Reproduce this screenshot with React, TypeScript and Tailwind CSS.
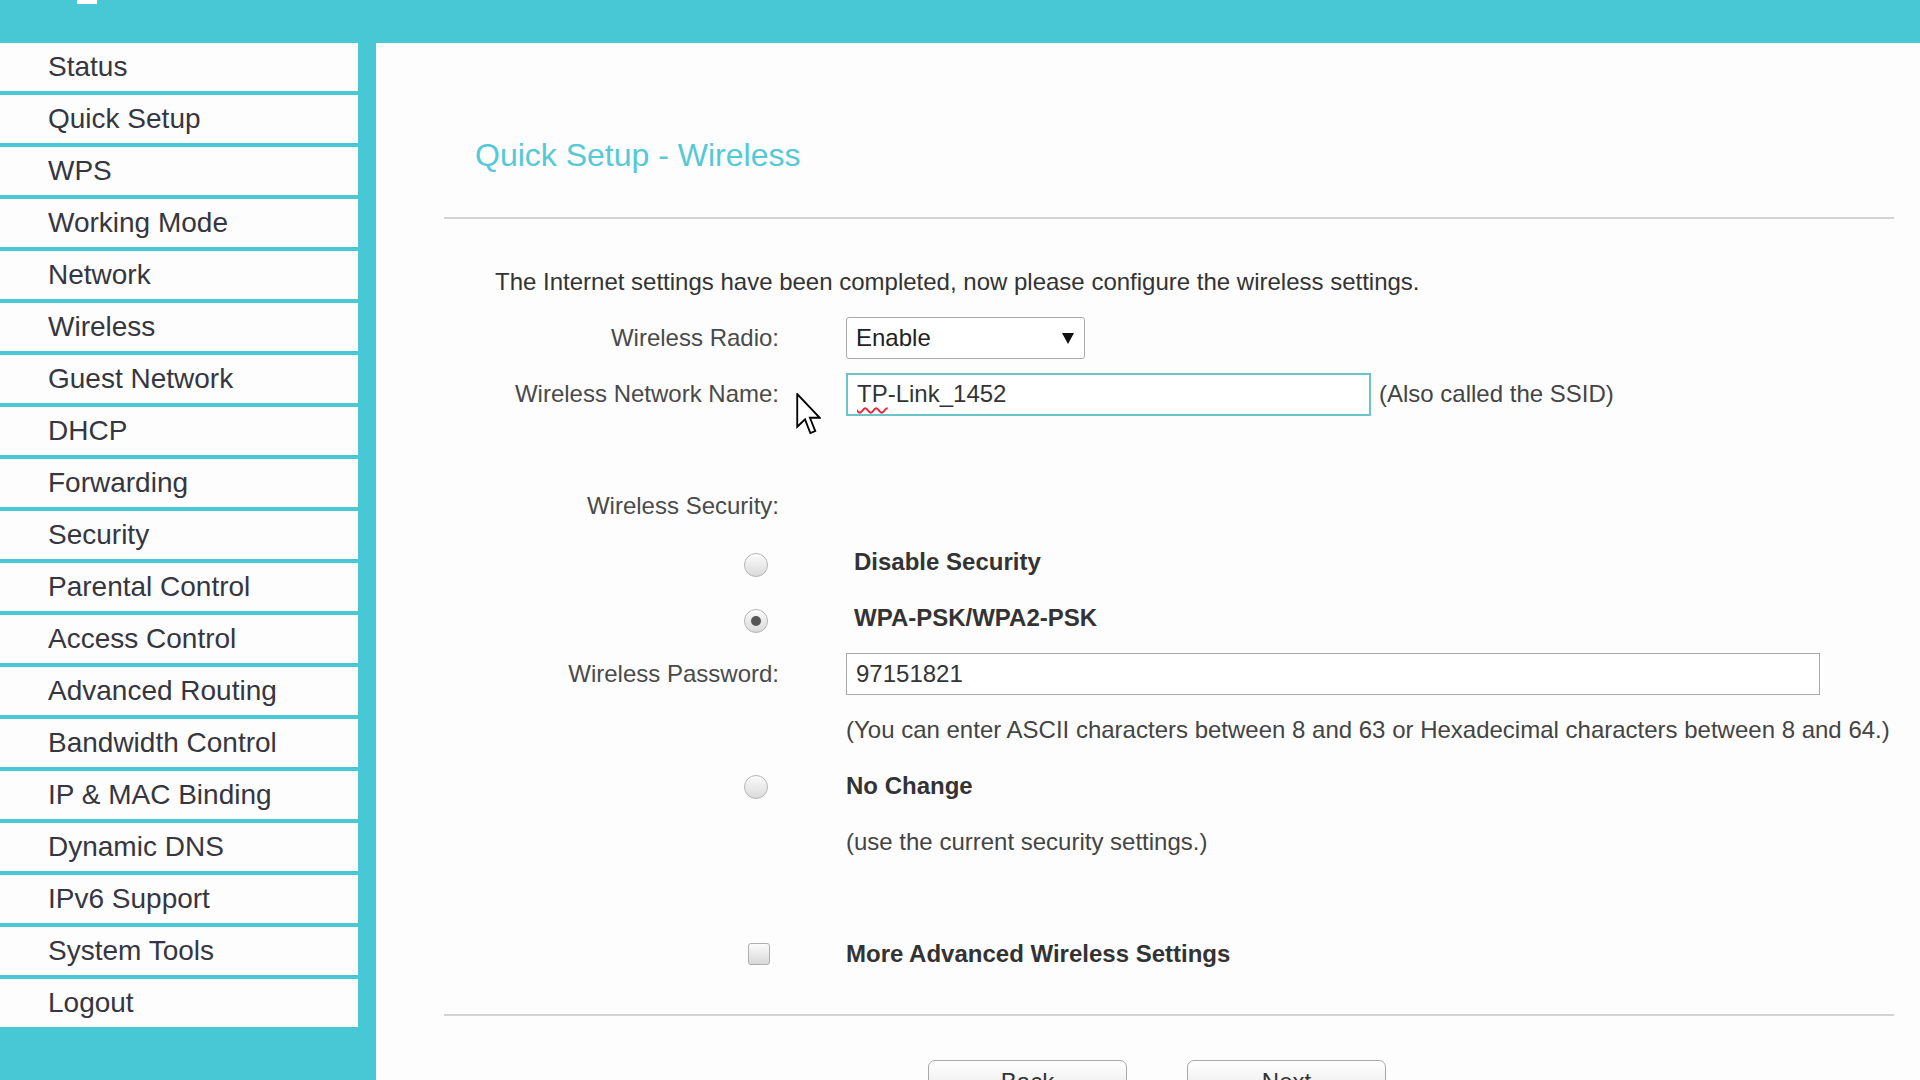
import React from "react";

const menu = [
  "Status",
  "Quick Setup",
  "WPS",
  "Working Mode",
  "Network",
  "Wireless",
  "Guest Network",
  "DHCP",
  "Forwarding",
  "Security",
  "Parental Control",
  "Access Control",
  "Advanced Routing",
  "Bandwidth Control",
  "IP & MAC Binding",
  "Dynamic DNS",
  "IPv6 Support",
  "System Tools",
  "Logout",
];

function Radio({ checked }: { checked?: boolean }) {
  return (
    <div className="w-[24px] h-[24px] rounded-full border border-[#b4b4b4] bg-linear-to-b from-[#fbfbfb] to-[#dadada] flex items-center justify-center shadow-[inset_0_1px_1px_rgba(255,255,255,0.8)]">
      {checked && <div className="w-[10px] h-[10px] rounded-full bg-[#555]" />}
    </div>
  );
}

function Checkbox() {
  return (
    <div className="w-[22px] h-[22px] rounded-[3px] border border-[#b0b0b0] bg-linear-to-b from-[#fbfbfb] to-[#d8d8d8]" />
  );
}

export default function App() {
  return (
    <div className="w-[1920px] h-[1080px] overflow-hidden flex flex-col bg-[#fdfdfd] font-['Liberation_Sans',Arial,sans-serif]">
      <div className="relative h-[43px] shrink-0 bg-[#48c7d4]">
        <div className="absolute left-[77px] top-0 w-[20px] h-[4px] bg-white" />
      </div>
      <div className="flex flex-1 min-h-0">
        <div className="w-[376px] shrink-0 bg-[#48c7d4] pr-[18px]">
          <div className="flex flex-col gap-[4px] bg-[#48c7d4]">
            {menu.map((m) => (
              <div
                key={m}
                className="h-[48px] bg-[#fdfdfd] flex items-center pl-[48px] text-[28px] text-[#363640]"
              >
                {m}
              </div>
            ))}
          </div>
        </div>
        <div className="relative flex-1 bg-[#fdfdfd] pl-[68px]">
          <div className="w-[1450px] flex flex-col">
            <div className="mt-[94px] h-[36px] leading-[36px] pl-[31px] text-[32px] text-[#55c9d6]">
              Quick Setup - Wireless
            </div>
            <div className="mt-[44px] h-[2px] bg-[#d4d4d4]" />
            <div className="mt-[35px] grid grid-cols-[335px_1fr] gap-x-[67px] auto-rows-[56px] text-[24px]">
              <div className="col-span-2 flex items-center pl-[51px] text-[#333]">
                The Internet settings have been completed, now please configure the wireless settings.
              </div>

              <div className="flex items-center justify-end text-[#4a4a4a]">Wireless Radio:</div>
              <div className="flex items-center">
                <div className="w-[239px] h-[42px] border border-[#a9a9a9] rounded-[3px] bg-white flex items-center justify-between pl-[9px] pr-[10px] text-[#222]">
                  <span>Enable</span>
                  <svg width="12" height="11" viewBox="0 0 12 11">
                    <polygon points="0,0 12,0 6,11" fill="#111" />
                  </svg>
                </div>
              </div>

              <div className="flex items-center justify-end text-[#4a4a4a]">Wireless Network Name:</div>
              <div className="flex items-center">
                <div className="w-[525px] h-[43px] border-2 border-[#6cc3c9] bg-white flex items-center pl-[9px] text-[#333]">
                  <span className="underline decoration-wavy decoration-[#e23] decoration-[1.5px] underline-offset-[5px]">TP</span>
                  <span>-Link_1452</span>
                </div>
                <span className="ml-[8px] text-[#444]">(Also called the SSID)</span>
              </div>

              <div />
              <div />

              <div className="flex items-center justify-end text-[#4a4a4a]">Wireless Security:</div>
              <div />

              <div className="flex items-center justify-end pr-[11px] pt-[5px]">
                <Radio />
              </div>
              <div className="flex items-center pl-[8px] text-[24px] font-bold text-[#333]">Disable Security</div>

              <div className="flex items-center justify-end pr-[11px] pt-[5px]">
                <Radio checked />
              </div>
              <div className="flex items-center pl-[8px] text-[24px] font-bold text-[#333]">WPA-PSK/WPA2-PSK</div>

              <div className="flex items-center justify-end text-[#4a4a4a]">Wireless Password:</div>
              <div className="flex items-center">
                <div className="w-[974px] h-[42px] border border-[#a9a9a9] bg-white flex items-center pl-[9px] text-[#333]">
                  97151821
                </div>
              </div>

              <div />
              <div className="flex items-center whitespace-nowrap text-[#444]">
                (You can enter ASCII characters between 8 and 63 or Hexadecimal characters between 8 and 64.)
              </div>

              <div className="flex items-center justify-end pr-[11px] pt-[2px]">
                <Radio />
              </div>
              <div className="flex items-center text-[24px] font-bold text-[#333]">No Change</div>

              <div />
              <div className="flex items-center text-[#444]">(use the current security settings.)</div>

              <div />
              <div />

              <div className="flex items-center justify-end pr-[9px]">
                <Checkbox />
              </div>
              <div className="flex items-center text-[24px] font-bold text-[#333]">More Advanced Wireless Settings</div>
            </div>
            <div className="mt-[32px] h-[2px] bg-[#d4d4d4]" />
            <div className="mt-[44px] ml-[484px] flex gap-[60px]">
              <div className="w-[199px] h-[44px] rounded-[7px] border border-[#a8a8a8] bg-linear-to-b from-[#ffffff] to-[#e4e4e4] flex justify-center pt-[3px] text-[24px] text-[#333]">
                Back
              </div>
              <div className="w-[199px] h-[44px] rounded-[7px] border border-[#a8a8a8] bg-linear-to-b from-[#ffffff] to-[#e4e4e4] flex justify-center pt-[3px] text-[24px] text-[#333]">
                Next
              </div>
            </div>
          </div>
          <svg
            className="absolute left-[420px] top-[350px]"
            width="25"
            height="43"
            viewBox="0 0 12 21"
          >
            <path
              d="M0.5 0.5 L0.5 16.5 L4.3 12.9 L6.9 19.6 L9.3 18.6 L6.7 12.1 L11.5 12.1 Z"
              fill="#fff"
              stroke="#000"
              strokeWidth="0.9"
              strokeLinejoin="miter"
            />
          </svg>
        </div>
      </div>
    </div>
  );
}
